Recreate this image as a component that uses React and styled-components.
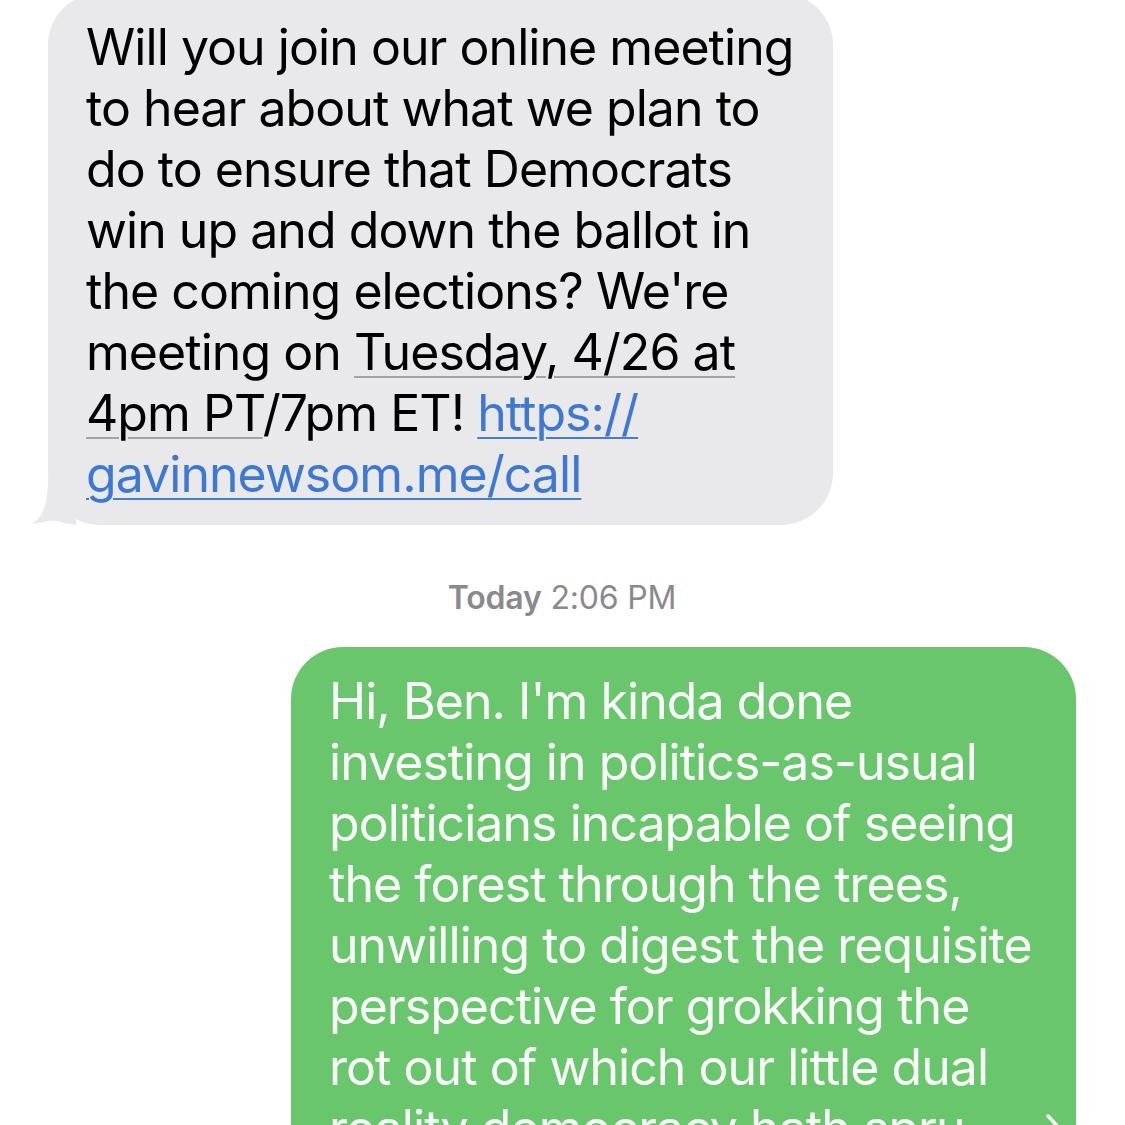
import styled, { createGlobalStyle } from "styled-components";

const Global = createGlobalStyle`
  html, body {
    margin: 0;
    padding: 0;
    background: #fff;
  }
  body {
    width: 1125px;
    height: 1125px;
    overflow: hidden;
    font-family: 'Inter', 'Liberation Sans', sans-serif;
  }
`

const Thread = styled.div`
    display: flex;
    flex-direction: column;
    padding: 0 49px 0 48px;
    margin-top: -7px;
`

const Bubble = styled.div`
    position: relative;
    box-sizing: border-box;
    width: 785px;
    padding: 24px 38px 20px 38px;
    background: ${(props) => props.$sent ? '#6ac66c' : '#e9e9eb'};
    color: ${(props) => props.$sent ? '#fbfffb' : '#000'};
    border-radius: 52px;
    align-self: ${(props) => props.$sent ? 'flex-end' : 'flex-start'};
    font-size: 50px;
    line-height: 61px;
    letter-spacing: -0.95px;
`

const Line = styled.div`
    white-space: nowrap;
`

const LastLine = styled.div`
    display: flex;
    justify-content: space-between;
    align-items: center;
    white-space: nowrap;
`

const Detected = styled.span`
    text-decoration: underline;
    text-decoration-color: #a3a3a6;
    text-decoration-thickness: 2px;
    text-underline-offset: 6px;
`

const Link = styled.span`
    color: #3e79d1;
    text-decoration: underline;
    text-decoration-color: #4a7cc7;
    text-decoration-thickness: 2px;
    text-underline-offset: 6px;
`

const Tail = styled.svg`
    position: absolute;
    left: -16px;
    bottom: 0;
`

const Stamp = styled.div`
    margin: 54px 0 30px;
    text-align: center;
    font-size: 32px;
    line-height: 38px;
    color: #8a8a8e;
    letter-spacing: -0.2px;
    b {
        font-weight: 600;
    }
`

const Chevron = styled.svg`
    margin-right: -26px;
`

export default function App() {
    return (
        <>
            <Global />
            <Thread>
                <Bubble>
                    <Line>Will you join our online meeting</Line>
                    <Line>to hear about what we plan to</Line>
                    <Line>do to ensure that Democrats</Line>
                    <Line>win up and down the ballot in</Line>
                    <Line>the coming elections? We're</Line>
                    <Line>meeting on <Detected>Tuesday, 4/26 at</Detected></Line>
                    <Line><Detected>4pm PT</Detected>/7pm ET! <Link>https://</Link></Line>
                    <Line><Link>gavinnewsom.me/call</Link></Line>
                    <Tail width="44" height="46" viewBox="0 0 44 46">
                        <path d="M44 0 L44 46 L32 44 C24 40 16 42 0 45 C10 38 16 28 16 0 Z" fill="#e9e9eb" />
                    </Tail>
                </Bubble>
                <Stamp><b>Today</b> 2:06 PM</Stamp>
                <Bubble $sent>
                    <Line>Hi, Ben. I'm kinda done</Line>
                    <Line>investing in politics-as-usual</Line>
                    <Line>politicians incapable of seeing</Line>
                    <Line>the forest through the trees,</Line>
                    <Line>unwilling to digest the requisite</Line>
                    <Line>perspective for grokking the</Line>
                    <Line>rot out of which our little dual</Line>
                    <LastLine>
                        <span>reality democracy hath spru</span>
                        <Chevron width="20" height="34" viewBox="0 0 20 34">
                            <path d="M4 4 L16 17 L4 30" fill="none" stroke="#fbfffb" strokeWidth="3.5" strokeLinecap="round" strokeLinejoin="round" />
                        </Chevron>
                    </LastLine>
                    <Line>out of.</Line>
                </Bubble>
            </Thread>
        </>
    )
}
